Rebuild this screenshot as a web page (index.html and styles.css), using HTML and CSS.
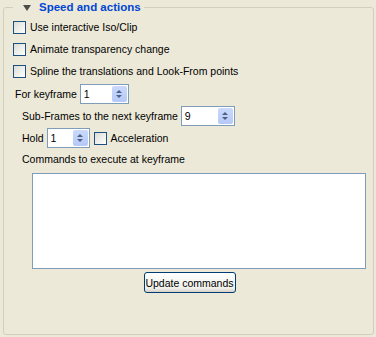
FILE: index.html
```html
<!DOCTYPE html>
<html lang="en">
<head>
    <meta charset="UTF-8">
    <title>Speed and actions</title>
    <link rel="stylesheet" href="styles.css">
</head>
<body>
    <fieldset class="panel">
        <legend><span class="arrow"></span>Speed and actions</legend>

        <label class="check-row"><span class="box"></span>Use interactive Iso/Clip</label>
        <label class="check-row"><span class="box"></span>Animate transparency change</label>
        <label class="check-row"><span class="box"></span>Spline the translations and Look-From points</label>

        <div class="row key-row">
            For keyframe
            <div class="spinner w-key"><span class="value">1</span><span class="spin-btn"><span class="up"></span><span class="down"></span></span></div>
        </div>

        <div class="sub">
            <div class="row">
                Sub-Frames to the next keyframe
                <div class="spinner w-sub"><span class="value">9</span><span class="spin-btn"><span class="up"></span><span class="down"></span></span></div>
            </div>
            <div class="row">
                Hold
                <div class="spinner w-hold"><span class="value">1</span><span class="spin-btn"><span class="up"></span><span class="down"></span></span></div>
                <label class="inline-check"><span class="box"></span>Acceleration</label>
            </div>
            <div class="caption">Commands to execute at keyframe</div>
        </div>

        <textarea class="commands"></textarea>

        <div class="actions">
            <button class="btn">Update commands</button>
        </div>
    </fieldset>
</body>
</html>
```

FILE: styles.css
```css
body {
    margin: 0;
    width: 376px;
    height: 337px;
    background-color: #ece9d8;
    font-family: "Liberation Sans", Arial, sans-serif;
    font-size: 10.5px;
    color: #000;
}

/* Group box */
.panel {
    margin: 0 2px 0 3px;
    padding: 2px 7px 41px 9px;
    border: 1px solid #d0d0bf;
    border-radius: 3px;
    min-width: 0;
}

.panel legend {
    padding: 0 3px 0 10px;
    height: 14px;
    line-height: 14px;
    font-size: 11.5px;
    font-weight: bold;
    color: #0046d5;
    display: flex;
    align-items: center;
}

.arrow {
    width: 0;
    height: 0;
    border-left: 4px solid transparent;
    border-right: 4px solid transparent;
    border-top: 6px solid #4d4d4d;
    margin-right: 8px;
    margin-top: 1px;
}

/* Checkboxes */
.check-row {
    display: flex;
    align-items: center;
    height: 22px;
}

.box {
    width: 11px;
    height: 11px;
    border: 1px solid #1c5180;
    background: linear-gradient(135deg, #dcdcd7 0%, #f4f4f1 70%, #ffffff 100%);
    margin-right: 4px;
    flex: none;
}

.inline-check {
    display: flex;
    align-items: center;
    margin-left: 4px;
}

/* Spinner rows */
.row {
    display: flex;
    align-items: center;
    height: 22px;
}

.key-row {
    margin-top: 1px;
    padding-left: 2px;
}

.sub {
    padding-left: 9px;
}

.spinner {
    display: flex;
    height: 18px;
    border: 1px solid #7f9db9;
    background-color: #fff;
    margin-left: 3px;
    box-sizing: content-box;
}

.spinner .value {
    flex: 1;
    padding-left: 3px;
    line-height: 18px;
}

.w-key { width: 47px; }
.w-sub { width: 52px; }
.w-hold { width: 41px; }

.spin-btn {
    width: 15px;
    margin: 1px;
    border-radius: 2px;
    background: linear-gradient(#cad9fc, #b5c9f7);
    display: flex;
    flex-direction: column;
    align-items: center;
    justify-content: center;
    gap: 2px;
}

.spin-btn .up,
.spin-btn .down {
    width: 0;
    height: 0;
    border-left: 3px solid transparent;
    border-right: 3px solid transparent;
}

.spin-btn .up {
    border-bottom: 3px solid #4d6185;
}

.spin-btn .down {
    border-top: 3px solid #4d6185;
}

.caption {
    height: 20px;
    line-height: 20px;
}

/* Commands box */
.commands {
    display: block;
    box-sizing: border-box;
    width: 334px;
    height: 96px;
    margin: 4px 0 0 19px;
    border: 1px solid #7f9db9;
    background-color: #fff;
    resize: none;
}

.actions {
    display: flex;
    justify-content: center;
    margin-top: 3px;
}

.btn {
    width: 92px;
    height: 21px;
    padding: 0;
    white-space: nowrap;
    font-family: "Liberation Sans", Arial, sans-serif;
    font-size: 10.5px;
    color: #000;
    border: 1px solid #003c74;
    border-radius: 3px;
    background: linear-gradient(#ffffff, #f0f0ea 80%, #d6d0c5);
}
```
